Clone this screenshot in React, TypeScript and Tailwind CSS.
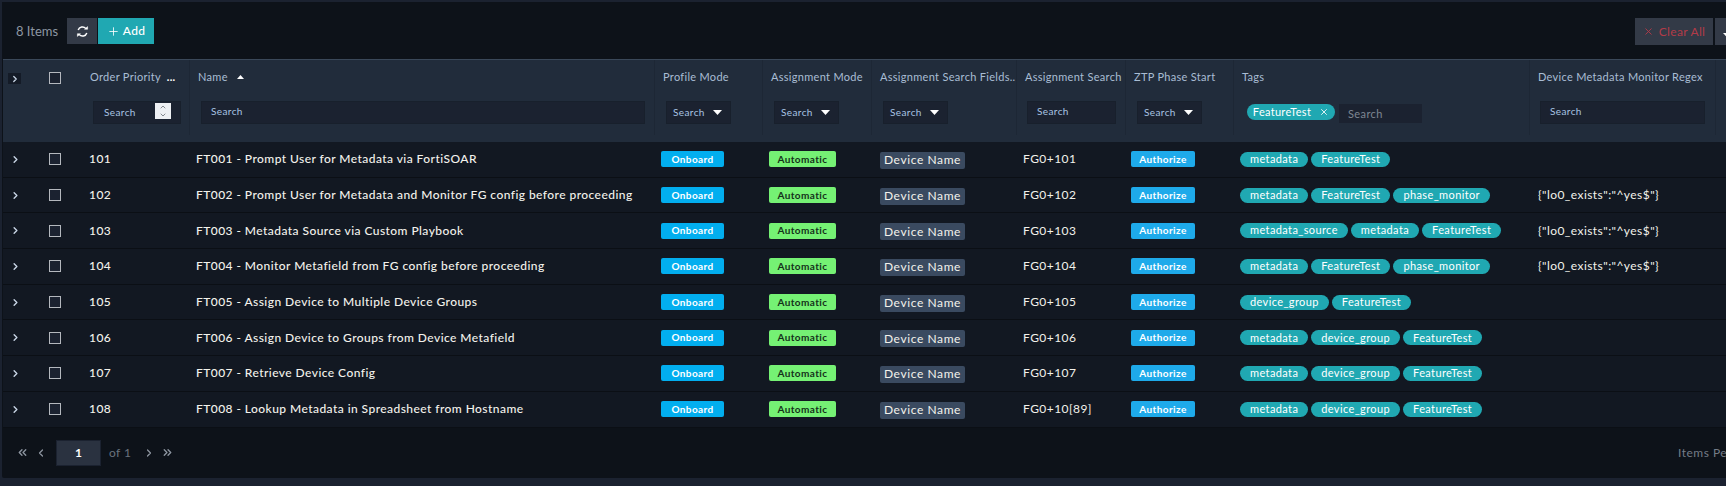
import React from 'react';
import { ChevronLeft, ChevronRight, ChevronsLeft, ChevronsRight, ChevronUp, ChevronDown, Plus, X } from 'lucide-react';

const cols = 'grid grid-cols-[30px_44px_113px_465px_108px_109px_145px_109px_108px_296px_186px_100px]';

const rows = [
  { order: '101', name: 'FT001 - Prompt User for Metadata via FortiSOAR', search: 'FG0+101', tags: ['metadata', 'FeatureTest'], regex: '' },
  { order: '102', name: 'FT002 - Prompt User for Metadata and Monitor FG config before proceeding', search: 'FG0+102', tags: ['metadata', 'FeatureTest', 'phase_monitor'], regex: '{"lo0_exists":"^yes$"}' },
  { order: '103', name: 'FT003 - Metadata Source via Custom Playbook', search: 'FG0+103', tags: ['metadata_source', 'metadata', 'FeatureTest'], regex: '{"lo0_exists":"^yes$"}' },
  { order: '104', name: 'FT004 - Monitor Metafield from FG config before proceeding', search: 'FG0+104', tags: ['metadata', 'FeatureTest', 'phase_monitor'], regex: '{"lo0_exists":"^yes$"}' },
  { order: '105', name: 'FT005 - Assign Device to Multiple Device Groups', search: 'FG0+105', tags: ['device_group', 'FeatureTest'], regex: '' },
  { order: '106', name: 'FT006 - Assign Device to Groups from Device Metafield', search: 'FG0+106', tags: ['metadata', 'device_group', 'FeatureTest'], regex: '' },
  { order: '107', name: 'FT007 - Retrieve Device Config', search: 'FG0+107', tags: ['metadata', 'device_group', 'FeatureTest'], regex: '' },
  { order: '108', name: 'FT008 - Lookup Metadata in Spreadsheet from Hostname', search: 'FG0+10[89]', tags: ['metadata', 'device_group', 'FeatureTest'], regex: '' },
];

const Checkbox = () => <div className="w-3 h-3 border border-[#b4b8be] bg-[#1b2230]" />;

const Caret = () => (
  <svg width="9" height="5" viewBox="0 0 9 5" className="fill-white">
    <path d="M0 0h9L4.5 5z" />
  </svg>
);

const HeaderCell = ({ label, children }: { label: string; children?: React.ReactNode }) => (
  <div className="h-[75px] border-r border-[#1d2735] pl-2 pt-[9px] overflow-hidden whitespace-nowrap">
    <div className="text-[11px] leading-[16px] tracking-[0.3px] text-[#a9bdd4]">{label}</div>
    <div className="mt-[16px]">{children}</div>
  </div>
);

const SelectFilter = () => (
  <div className="ml-[3px] w-[65px] h-[23px] bg-[#1b2230] border border-[#18202c] flex items-center pl-[6px] gap-[8px] text-[10px] tracking-[0.4px] text-[#a9c4e4]">
    Search
    <Caret />
  </div>
);

const TextFilter = ({ width }: { width: string }) => (
  <div className={`ml-[2px] h-[23px] bg-[#1b2230] border border-[#18202c] pl-[9px] leading-[18px] text-[10px] tracking-[0.4px] text-[#a9c4e4] ${width}`}>
    Search
  </div>
);

const Badge = ({ children, color }: { children: React.ReactNode; color: string }) => (
  <span className={`h-4 rounded-[2px] flex items-center justify-center text-[10px] font-bold tracking-[0.4px] ${color}`}>
    {children}
  </span>
);

const Tag = ({ children }: { children: React.ReactNode }) => (
  <span className="h-[15px] px-[10px] rounded-full bg-[#20a8b2] flex items-center text-[11px] tracking-[0.38px] text-white">
    {children}
  </span>
);

export default function App() {
  return (
    <div className="w-[1726px] h-[486px] overflow-hidden bg-[#1b2230] pt-[2px] pl-[2px] font-['Lato',sans-serif]">
      <div className="h-[476px] bg-[#0d1219] overflow-hidden rounded-bl-[2px]">
        {/* Toolbar */}
        <div className="h-[57px] flex items-start pt-4 pl-[14px]">
          <span className="w-[51px] text-[13px] leading-[26px] text-[#8d97a3]">8 Items</span>
          <button className="w-[30px] h-[26px] bg-[#333a47] flex items-center justify-center">
            <svg width="13" height="13" viewBox="0 0 13 13" fill="none" stroke="white" strokeWidth="1.5">
              <path d="M2.2 5a4.5 4.5 0 0 1 7.6-1.6" />
              <path d="M10.8 8a4.5 4.5 0 0 1-7.6 1.6" />
              <path d="M8.6 4.3h3V1.6z" fill="white" strokeWidth="0.5" />
              <path d="M4.4 8.7h-3v2.7z" fill="white" strokeWidth="0.5" />
            </svg>
          </button>
          <button className="ml-px w-[56px] h-[26px] bg-[#20a8b2] flex items-center justify-center gap-[3px] text-[12px] font-medium tracking-[0.3px] text-white">
            <Plus size={13} strokeWidth={1.5} />
            Add
          </button>
          <button className="ml-auto w-[78px] h-[27px] bg-[#333a47] flex items-center justify-center gap-[5px] text-[12px] tracking-[0.3px] text-[#b23a48]">
            <X size={11} strokeWidth={2} />
            Clear All
          </button>
          <button className="ml-[2px] w-[11px] h-[27px] bg-[#333a47] pl-[8px] pt-[8px] overflow-hidden">
            <Caret />
          </button>
        </div>

        {/* Table */}
        <div className="ml-px overflow-hidden">
          <div className={`${cols} h-[83px] w-max bg-[#212c3b] border-t border-[#3a4859]`}>
            <div className="pt-[13px] pl-[5px]">
              <div className="w-[13px] h-[11px] bg-[#141b27] flex items-center justify-center text-[#c9d6e6]">
                <ChevronRight size={10} strokeWidth={3} />
              </div>
            </div>
            <div className="pt-[12px] pl-[16px]">
              <Checkbox />
            </div>
            <div className="h-[75px] border-r border-[#1d2735] pl-[13px] pt-[9px] whitespace-nowrap">
              <div className="text-[11px] leading-[16px] tracking-[0.3px] text-[#a9bdd4]">
                Order Priority <span className="ml-[3px] font-bold text-white">...</span>
              </div>
              <div className="mt-[16px] ml-[3px] w-[88px] h-[23px] bg-[#1b2230] border border-[#18202c] flex items-center pl-[10px] text-[10px] tracking-[0.4px] text-[#a9c4e4] relative">
                Search
                <div className="absolute left-[61px] top-[1px] w-4 h-4 bg-[#eef0f3] flex flex-col items-center justify-center text-[#6f747b]">
                  <ChevronUp size={8} strokeWidth={2.5} />
                  <ChevronDown size={8} strokeWidth={2.5} />
                </div>
              </div>
            </div>
            <div className="h-[75px] border-r border-[#1d2735] pl-2 pt-[9px] whitespace-nowrap">
              <div className="flex items-center gap-[9px] text-[11px] leading-[16px] tracking-[0.3px] text-[#a9bdd4]">
                Name
                <svg width="7" height="4" viewBox="0 0 7 4" className="fill-white">
                  <path d="M0 4 3.5 0 7 4z" />
                </svg>
              </div>
              <div className="mt-[16px] ml-px">
                <TextFilter width="w-[444px]" />
              </div>
            </div>
            <HeaderCell label="Profile Mode"><SelectFilter /></HeaderCell>
            <HeaderCell label="Assignment Mode"><SelectFilter /></HeaderCell>
            <HeaderCell label="Assignment Search Fields.."><SelectFilter /></HeaderCell>
            <HeaderCell label="Assignment Search"><TextFilter width="w-[89px]" /></HeaderCell>
            <HeaderCell label="ZTP Phase Start"><SelectFilter /></HeaderCell>
            <div className="h-[75px] border-r border-[#1d2735] pl-2 pt-[9px]">
              <div className="text-[11px] leading-[16px] tracking-[0.3px] text-[#a9bdd4]">Tags</div>
              <div className="mt-[19px] ml-[5px] flex items-start gap-1">
                <span className="w-[88px] h-4 rounded-full bg-[#20a8b2] flex items-center justify-center gap-[8px] text-[11px] tracking-[0.3px] text-white">
                  FeatureTest
                  <X size={10} strokeWidth={2} />
                </span>
                <div className="w-[83px] h-[19px] bg-[#1b2230] pl-[9px] text-[11px] leading-[19px] tracking-[0.4px] text-[#7f8793]">Search</div>
              </div>
            </div>
            <HeaderCell label="Device Metadata Monitor Regex"><TextFilter width="w-[165px]" /></HeaderCell>
            <div />
          </div>

          {rows.map((row) => (
            <div
              key={row.order}
              className={`${cols} h-[35.7px] w-max items-center bg-[#121822] border-b border-[#0b0f15] text-[12px] tracking-[0.44px] text-[#f3f2ec]`}
            >
              <div className="pl-[7px] text-[#c9d6e6]">
                <ChevronRight size={11} strokeWidth={3} />
              </div>
              <div className="pl-[16px]">
                <Checkbox />
              </div>
              <div className="pl-[12px] font-medium">{row.order}</div>
              <div className="pl-[6px] font-medium whitespace-nowrap">{row.name}</div>
              <div className="pl-[6px]">
                <Badge color="w-[63px] bg-[#02aeef] text-white">Onboard</Badge>
              </div>
              <div className="pl-[6px]">
                <Badge color="w-[67px] bg-[#75f174] text-[#14301a]">Automatic</Badge>
              </div>
              <div className="pl-2 pt-[2px]">
                <span className="w-[85px] h-[17px] rounded-[2px] bg-[#3a4a60] flex items-center justify-center text-[12px] tracking-[0.6px]">
                  Device Name
                </span>
              </div>
              <div className="pl-[6px]">{row.search}</div>
              <div className="pl-[5px]">
                <Badge color="w-[64px] bg-[#1eaaea] text-white">Authorize</Badge>
              </div>
              <div className="pl-[6px] flex gap-[3px]">
                {row.tags.map((tag) => (
                  <Tag key={tag}>{tag}</Tag>
                ))}
              </div>
              <div className="pl-[8px] whitespace-nowrap">{row.regex}</div>
              <div />
            </div>
          ))}
        </div>

        {/* Pagination */}
        <div className="h-[50px] flex items-center pl-[14px] text-[#8d95a0]">
          <ChevronsLeft size={13} strokeWidth={2.5} />
          <ChevronLeft size={12} strokeWidth={2.5} className="ml-[6px]" />
          <div className="ml-[9px] w-[45px] h-[26px] bg-[#2a3240] border border-[#1b2230] flex items-center justify-center text-[12px] font-bold text-white">
            1
          </div>
          <span className="ml-2 text-[12px] tracking-[0.4px] text-[#6a727d]">of 1</span>
          <ChevronRight size={12} strokeWidth={2.5} className="ml-[12px]" />
          <ChevronsRight size={13} strokeWidth={2.5} className="ml-[6px]" />
          <div className="ml-auto w-[48px] overflow-hidden">
            <span className="block w-max text-[12px] tracking-[0.5px] text-[#747c87]">Items Per Page</span>
          </div>
        </div>
      </div>
    </div>
  );
}
